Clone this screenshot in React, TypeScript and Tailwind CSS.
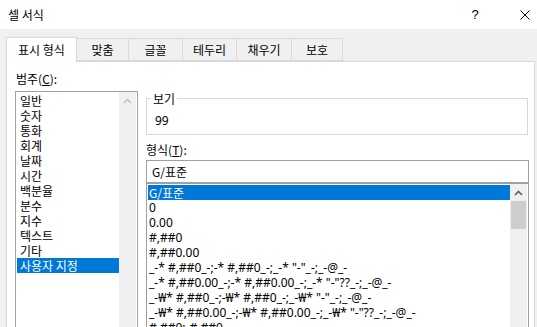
import React from "react";

const KR = { fontFamily: '"Noto Sans CJK KR", "Noto Sans", sans-serif' };
const LAT = { fontFamily: '"Segoe UI", "Noto Sans", "Noto Sans CJK KR", sans-serif' };

const categories = ["일반", "숫자", "통화", "회계", "날짜", "시간", "백분율", "분수", "지수", "텍스트", "기타", "사용자 지정"];
const formats = [
  "G/표준",
  "0",
  "0.00",
  "#,##0",
  "#,##0.00",
  '_-* #,##0_-;-* #,##0_-;_-* "-"_-;_-@_-',
  '_-* #,##0.00_-;-* #,##0.00_-;_-* "-"??_-;_-@_-',
  '_-₩* #,##0_-;-₩* #,##0_-;_-₩* "-"_-;_-@_-',
  '_-₩* #,##0.00_-;-₩* #,##0.00_-;_-₩* "-"??_-;_-@_-',
  "#,##0;-#,##0",
];

function Chevron({ color }: { color: string }) {
  return (
    <svg width="9" height="6" viewBox="0 0 9 6">
      <path d="M1 5 L4.5 1.5 L8 5" fill="none" stroke={color} strokeWidth="1.6" />
    </svg>
  );
}

export default function App() {
  const tabs = ["맞춤", "글꼴", "테두리", "채우기", "보호"];
  const tabW = [52, 54, 54, 55, 51];
  return (
    <div className="w-[537px] h-[327px] overflow-hidden bg-[#f0f0f0] text-[12px] text-black flex flex-col" style={KR}>
      {/* title bar */}
      <div className="h-[29px] bg-white flex items-center shrink-0">
        <div className="pl-[8px] leading-[15px] text-[12px]">셀 서식</div>
        <div className="ml-auto flex items-center">
          <div className="w-[14px] text-[13px] leading-[15px] text-center mr-[38px]" style={{ fontFamily: '"Liberation Sans", sans-serif' }}>?</div>
          <svg width="10" height="10" viewBox="0 0 10 10" className="mr-[7px]">
            <path d="M0.5 0.5 L9.5 9.5 M9.5 0.5 L0.5 9.5" stroke="#000" strokeWidth="1" />
          </svg>
        </div>
      </div>
      {/* tabs */}
      <div className="pl-[6px] pt-[8px] flex items-end shrink-0 relative z-10">
        <div className="w-[71px] h-[25px] bg-white border border-b-0 border-[#d9d9d9] flex items-center justify-center leading-[15px] mb-[-1px] pb-[1px]">
          표시 형식
        </div>
        {tabs.map((t, i) => (
          <div
            key={t}
            style={{ width: tabW[i] }}
            className="h-[23px] border border-l-0 border-[#d9d9d9] flex items-center justify-center leading-[15px] bg-[#f0f0f0]"
          >
            {t}
          </div>
        ))}
      </div>
      {/* panel */}
      <div className="ml-[6px] w-[529px] flex-1 bg-white border border-[#d9d9d9] flex">
        {/* left */}
        <div className="pl-[8px] pt-[9px] w-[131px] shrink-0 flex flex-col">
          <div className="leading-[15px] pl-[1px]">
            범주(<span className="underline">C</span>):
          </div>
          <div className="mt-[5px] w-[123px] h-[300px] border border-[#a0a0a0] flex">
            <div className="flex-1 pt-[1px] pl-[1px]">
              {categories.map((c, i) => (
                <div
                  key={c}
                  className={
                    "h-[15px] leading-[15px] pl-[3px] " +
                    (i === categories.length - 1 ? "bg-[#0078d7] text-white" : "")
                  }
                >
                  {c}
                </div>
              ))}
            </div>
            <div className="w-[17px] bg-[#f0f0f0] flex flex-col items-center pt-[6px]">
              <Chevron color="#c0c0c0" />
            </div>
            <div className="w-[1px]" />
          </div>
        </div>
        {/* right */}
        <div className="ml-[8px] w-[383px] pt-[29px] flex flex-col">
          <fieldset className="h-[44px] border border-[#d9d9d9] m-0 p-0 min-w-0 w-[382px]">
            <legend className="ml-[4px] px-[2px] leading-[15px]">보기</legend>
            <div className="pl-[8px] pt-[7px] leading-[15px]" style={LAT}>99</div>
          </fieldset>
          <div className="mt-[7px] leading-[15px]">
            형식(<span className="underline">T</span>):
          </div>
          <div className="mt-[3px] w-[383px] h-[23px] border border-[#a0a0a0] flex items-center pl-[5px] leading-[15px]">
            G/표준
          </div>
          <div className="w-[383px] h-[200px] border border-[#a0a0a0] border-t-[#a0a0a0] flex">
            <div className="flex-1 pt-[1px] pl-[1px] overflow-hidden">
              {formats.map((f, i) => (
                <div
                  key={i}
                  className={
                    "h-[15px] leading-[15px] pl-[1px] whitespace-nowrap " +
                    (i === 0 ? "bg-[#0078d7] text-white" : "")
                  }
                  style={i === 0 ? KR : LAT}
                >
                  {f}
                </div>
              ))}
            </div>
            <div className="w-[17px] bg-[#f0f0f0] flex flex-col items-center mr-[1px]">
              <div className="h-[17px] flex items-center justify-center">
                <Chevron color="#606060" />
              </div>
              <div className="w-[15px] h-[28px] bg-[#cdcdcd]" />
            </div>
          </div>
        </div>
      </div>
    </div>
  );
}
